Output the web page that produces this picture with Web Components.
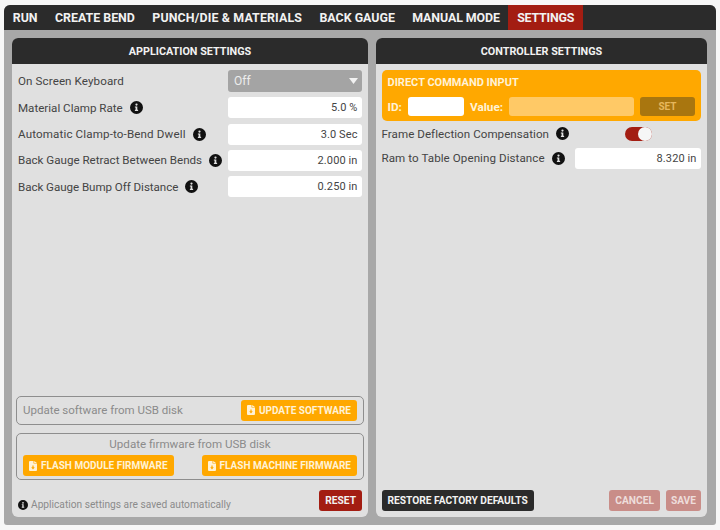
<!DOCTYPE html>
<html>
<head>
<meta charset="utf-8">
<style>
  html, body { margin: 0; padding: 0; background: #f7f7f7; }
  body { width: 720px; height: 530px; padding: 5px 4px; box-sizing: border-box; font-family: Roboto, "Noto Sans", sans-serif; }
</style>
</head>
<body>
<app-frame>
  <nav-tab>RUN</nav-tab>
  <nav-tab>CREATE BEND</nav-tab>
  <nav-tab style="letter-spacing:.14px">PUNCH/DIE &amp; MATERIALS</nav-tab>
  <nav-tab>BACK GAUGE</nav-tab>
  <nav-tab style="letter-spacing:-.1px">MANUAL MODE</nav-tab>
  <nav-tab active style="letter-spacing:-.2px">SETTINGS</nav-tab>

  <settings-panel slot="panels" title="APPLICATION SETTINGS" style="width:356px">
    <setting-row label="On Screen Keyboard" track=".1" kind="select" value="Off"></setting-row>
    <setting-row label="Material Clamp Rate" info value="5.0 %"></setting-row>
    <setting-row label="Automatic Clamp-to-Bend Dwell" track=".14" info value="3.0 Sec"></setting-row>
    <setting-row label="Back Gauge Retract Between Bends" info value="2.000 in"></setting-row>
    <setting-row label="Back Gauge Bump Off Distance" track="-.05" info value="0.250 in"></setting-row>
    <div slot="footer">
      <usb-box>
        <span style="color:#8b8b8b;font-size:11.5px">Update software from USB disk</span>
        <file-button style="margin-left:auto">UPDATE SOFTWARE</file-button>
      </usb-box>
      <usb-box stacked heading="Update firmware from USB disk">
        <file-button>FLASH MODULE FIRMWARE</file-button>
        <file-button>FLASH MACHINE FIRMWARE</file-button>
      </usb-box>
      <panel-foot>
        <info-dot size="10" style="align-self:flex-end;margin-bottom:1px"></info-dot>
        <span style="color:#8b8b8b;font-size:10.2px;margin-left:3px;align-self:flex-end;line-height:13px">Application settings are saved automatically</span>
        <flat-button style="margin-left:auto" bg="#a31d12">RESET</flat-button>
      </panel-foot>
    </div>
  </settings-panel>

  <settings-panel slot="panels" title="CONTROLLER SETTINGS" style="width:331px;--pad:5.5px;--pad-r:6px">
    <command-input></command-input>
    <setting-row label="Frame Deflection Compensation" track=".05" info kind="toggle" width="126"></setting-row>
    <setting-row label="Ram to Table Opening Distance" track=".07" info value="8.320 in" width="126" style="margin-top:-2px"></setting-row>
    <div slot="footer">
      <panel-foot>
        <flat-button bg="#2b2b2b">RESTORE FACTORY DEFAULTS</flat-button>
        <flat-button style="margin-left:auto" bg="#c98d88" fg="#eedddb">CANCEL</flat-button>
        <flat-button style="margin-left:6px;padding:0 5px" bg="#c98d88" fg="#eedddb">SAVE</flat-button>
      </panel-foot>
    </div>
  </settings-panel>
</app-frame>

<script>
const INFO_PATH = 'M8 0a8 8 0 1 0 0 16A8 8 0 0 0 8 0zM8 3a1.4 1.4 0 1 1 0 2.8A1.4 1.4 0 0 1 8 3zm2 9.2H6v-1.3h.9V8H6V6.8h3v4.1h1z';

class AppFrame extends HTMLElement {
  constructor() {
    super();
    const shadow = this.attachShadow({ mode: 'open' });
    shadow.innerHTML = `
      <style>
        :host { display: flex; flex-direction: column; width: 712px; height: 520px; background: #a8a8a8; border-radius: 6px 6px 3px 3px; overflow: hidden; }
        nav { display: flex; height: 25px; background: #2b2b2b; flex: none; }
        main { display: flex; gap: 8px; padding: 8px 9px 8px 8px; flex: 1; min-height: 0; }
      </style>
      <nav><slot></slot></nav>
      <main><slot name="panels"></slot></main>
    `;
  }
}

class NavTab extends HTMLElement {
  constructor() {
    super();
    const shadow = this.attachShadow({ mode: 'open' });
    shadow.innerHTML = `
      <style>
        :host { display: flex; align-items: center; padding: 0 8.7px; color: #f2f2f2; font-size: 12.4px; font-weight: 700; white-space: nowrap; }
        :host([active]) { background: #a31d12; }
      </style>
      <slot></slot>
    `;
  }
}

class SettingsPanel extends HTMLElement {
  constructor() {
    super();
    const shadow = this.attachShadow({ mode: 'open' });
    shadow.innerHTML = `
      <style>
        :host { display: flex; flex-direction: column; background: #e0e0e0; border-radius: 6px; overflow: hidden; flex: none; }
        header { height: 26px; background: #2b2b2b; color: #f2f2f2; font-size: 10.8px; font-weight: 700; display: flex; align-items: center; justify-content: center; flex: none; }
        .body { flex: 1; display: flex; flex-direction: column; gap: 5.3px; padding: 6px var(--pad-r, 6px) 0 var(--pad, 6px); min-height: 0; }
        .foot { padding: 0 var(--pad-r, 6px) 6px var(--pad, 6px); }
      </style>
      <header></header>
      <div class="body"><slot></slot></div>
      <div class="foot"><slot name="footer"></slot></div>
    `;
    shadow.querySelector('header').textContent = this.getAttribute('title');
    this.removeAttribute('title');
  }
}

class SettingRow extends HTMLElement {
  constructor() {
    super();
    const shadow = this.attachShadow({ mode: 'open' });
    const info = this.hasAttribute('info') ? '<info-dot size="13" style="margin-left:7px"></info-dot>' : '';
    const w = this.getAttribute('width') || 134;
    const value = this.getAttribute('value') || '';
    const kind = this.getAttribute('kind');
    const track = this.getAttribute('track') || 0;
    let control = `<div class="input" style="width:${w}px">${value}</div>`;
    if (kind === 'select') {
      control = `<div class="select" style="width:${w}px"><span>${value}</span><svg width="9" height="6" viewBox="0 0 9 6"><path d="M0 0h9L4.5 6z" fill="#f2f2f2"/></svg></div>`;
    } else if (kind === 'toggle') {
      control = `<div class="tog-wrap" style="width:${w}px"><div class="toggle"><i></i></div></div>`;
    }
    shadow.innerHTML = `
      <style>
        :host { display: flex; align-items: center; height: 21px; }
        :host([kind="select"]) { height: 22px; }
        .label { color: #444; font-size: 11.6px; white-space: nowrap; }
        .input { margin-left: auto; box-sizing: border-box; height: 21px; line-height: 21px; background: #fff; border-radius: 3px; padding: 0 4.5px; text-align: right; color: #444; font-size: 11px; letter-spacing: .1px; }
        .select { margin-left: auto; box-sizing: border-box; height: 22px; background: #a4a4a4; border-radius: 3px; padding: 0 4px 0 6px; color: #ededed; font-size: 12px; display: flex; align-items: center; justify-content: space-between; }
        .tog-wrap { margin-left: auto; display: flex; }
        .toggle { margin-left: 50px; width: 27px; height: 14px; background: #a31d12; border-radius: 7px; position: relative; }
        .toggle i { position: absolute; right: 0; top: 0; width: 14px; height: 14px; border-radius: 50%; background: #f6f6f6; }
      </style>
      <span class="label" style="letter-spacing:${track}px">${this.getAttribute('label')}</span>${info}
      ${control}
    `;
  }
}

class InfoDot extends HTMLElement {
  constructor() {
    super();
    const shadow = this.attachShadow({ mode: 'open' });
    const s = this.getAttribute('size') || 13;
    shadow.innerHTML = `
      <style>:host { display: inline-flex; flex: none; }</style>
      <svg width="${s}" height="${s}" viewBox="0 0 16 16"><path fill="#111" fill-rule="evenodd" d="${INFO_PATH}"/></svg>
    `;
  }
}

class CommandInput extends HTMLElement {
  constructor() {
    super();
    const shadow = this.attachShadow({ mode: 'open' });
    shadow.innerHTML = `
      <style>
        :host { display: block; background: #ffa800; border-radius: 5px; padding: 6px 6px 5px; color: #fff2d6; font-size: 11.8px; font-weight: 700; margin-bottom: -3px; }
        .title { height: 14px; line-height: 14px; font-size: 11px; }
        .row { display: flex; align-items: center; margin-top: 7px; }
        .id { width: 56px; height: 19px; background: #fff; border-radius: 3px; margin: 0 6px; }
        .val { flex: 1; height: 19px; background: #ffc966; border-radius: 3px; margin: 0 6px; }
        .set { width: 55px; height: 19px; background: #a9760f; border-radius: 3px; color: #e6b65c; display: flex; align-items: center; justify-content: center; font-size: 10px; }
      </style>
      <div class="title">DIRECT COMMAND INPUT</div>
      <div class="row">ID:<div class="id"></div>Value:<div class="val"></div><div class="set">SET</div></div>
    `;
  }
}

class UsbBox extends HTMLElement {
  constructor() {
    super();
    const shadow = this.attachShadow({ mode: 'open' });
    const heading = this.getAttribute('heading');
    shadow.innerHTML = `
      <style>
        :host { display: block; border: 1px solid #8e8e8e; border-radius: 5px; margin: 0 -2px 8.5px -2px; padding: 3px 6px; }
        .row { display: flex; align-items: center; }
        :host([stacked]) .row { justify-content: space-between; }
        .h { text-align: center; color: #8b8b8b; font-size: 11.6px; line-height: 16px; margin-bottom: 3px; }
        :host([stacked]) { padding: 2px 6px 3px; margin-bottom: 10px; }
      </style>
      ${heading ? `<div class="h">${heading}</div>` : ''}
      <div class="row"><slot></slot></div>
    `;
  }
}

class FileButton extends HTMLElement {
  constructor() {
    super();
    const shadow = this.attachShadow({ mode: 'open' });
    shadow.innerHTML = `
      <style>
        :host { display: inline-flex; align-items: center; gap: 4px; height: 21px; background: #ffa800; border-radius: 3px; padding: 0 6px; color: #fff2d6; font-size: 10px; font-weight: 700; white-space: nowrap; }
      </style>
      <svg width="8" height="10" viewBox="0 0 8 10"><path fill="#fff2d6" fill-rule="evenodd" d="M0 1a1 1 0 0 1 1-1h3.5v2.5H8V9a1 1 0 0 1-1 1H1a1 1 0 0 1-1-1zM5.2 0L8 1.9H5.2zM3.4 4.5v1.7H2.2L4 8.4l1.8-2.2H4.6V4.5z"/></svg>
      <slot></slot>
    `;
  }
}

class FlatButton extends HTMLElement {
  constructor() {
    super();
    const shadow = this.attachShadow({ mode: 'open' });
    shadow.innerHTML = `
      <style>
        :host { display: inline-flex; align-items: center; height: 21px; border-radius: 3px; padding: 0 6px; font-size: 10.2px; font-weight: 700; white-space: nowrap; }
      </style>
      <slot></slot>
    `;
    this.style.background = this.getAttribute('bg');
    this.style.color = this.getAttribute('fg') || '#f2f2f2';
  }
}

class PanelFoot extends HTMLElement {
  constructor() {
    super();
    const shadow = this.attachShadow({ mode: 'open' });
    shadow.innerHTML = `
      <style>:host { display: flex; align-items: center; height: 21px; }</style>
      <slot></slot>
    `;
  }
}

customElements.define('app-frame', AppFrame);
customElements.define('nav-tab', NavTab);
customElements.define('settings-panel', SettingsPanel);
customElements.define('setting-row', SettingRow);
customElements.define('info-dot', InfoDot);
customElements.define('command-input', CommandInput);
customElements.define('usb-box', UsbBox);
customElements.define('file-button', FileButton);
customElements.define('flat-button', FlatButton);
customElements.define('panel-foot', PanelFoot);
</script>
</body>
</html>
